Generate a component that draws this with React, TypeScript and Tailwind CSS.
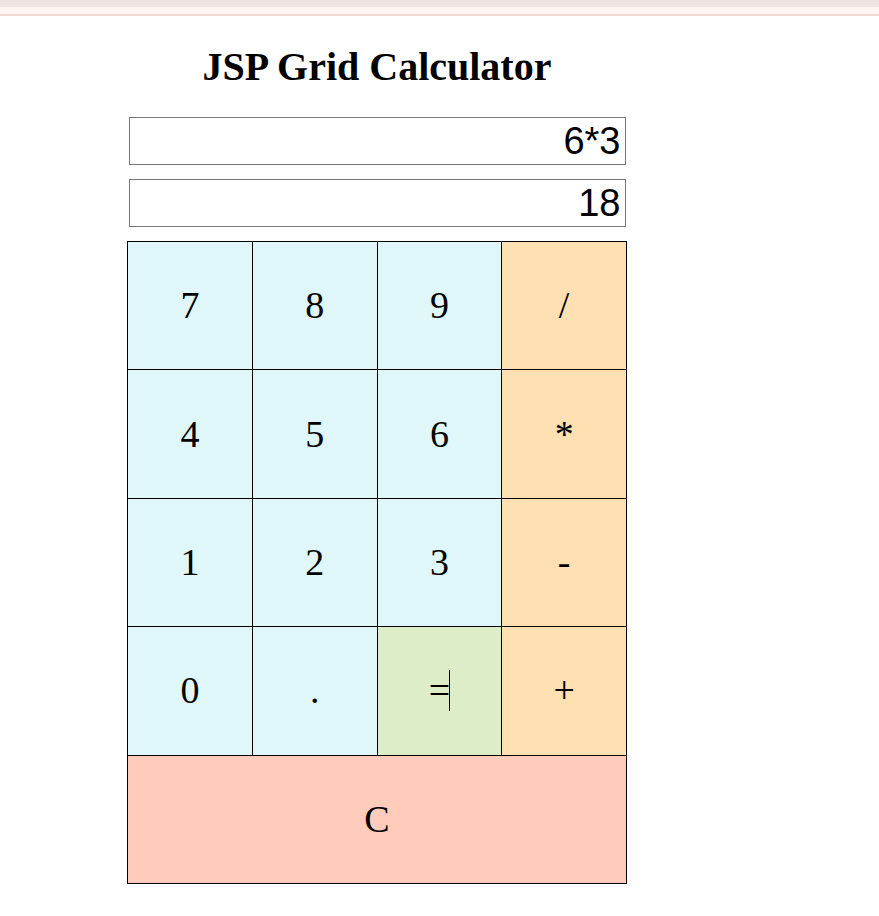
import React from "react";

const keys: { label: string; bg: string; span?: boolean; cursor?: boolean }[] = [
  { label: "7", bg: "bg-[#e0f7fa]" },
  { label: "8", bg: "bg-[#e0f7fa]" },
  { label: "9", bg: "bg-[#e0f7fa]" },
  { label: "/", bg: "bg-[#ffe0b2]" },
  { label: "4", bg: "bg-[#e0f7fa]" },
  { label: "5", bg: "bg-[#e0f7fa]" },
  { label: "6", bg: "bg-[#e0f7fa]" },
  { label: "*", bg: "bg-[#ffe0b2]" },
  { label: "1", bg: "bg-[#e0f7fa]" },
  { label: "2", bg: "bg-[#e0f7fa]" },
  { label: "3", bg: "bg-[#e0f7fa]" },
  { label: "-", bg: "bg-[#ffe0b2]" },
  { label: "0", bg: "bg-[#e0f7fa]" },
  { label: ".", bg: "bg-[#e0f7fa]" },
  { label: "=", bg: "bg-[#dcedc8]", cursor: true },
  { label: "+", bg: "bg-[#ffe0b2]" },
  { label: "C", bg: "bg-[#ffccbc]", span: true },
];

export default function App() {
  return (
    <div className="min-h-[916px] w-[879px] bg-white">
      <div className="h-[7px] bg-[#f0e4e2]" />
      <div className="h-[7px] bg-[#fff5f2]" />
      <div className="h-[2px] bg-[#f2d8d0]" />
      <div className="ml-[127px] w-[500px] flex flex-col items-center">
        <h1 className="mt-[28px] h-[46px] flex items-center justify-center text-[40px] font-bold text-black leading-none font-['Liberation_Serif',serif]">
          JSP Grid Calculator
        </h1>
        <div className="mt-[27px] flex flex-col gap-[14px] w-[497px]">
          <div className="h-[48px] border border-[#767676] flex items-center justify-end pr-[4px] text-[38px] leading-none text-black font-['Liberation_Sans',Arial,sans-serif]">
            6*3
          </div>
          <div className="h-[48px] border border-[#767676] flex items-center justify-end pr-[4px] text-[38px] leading-none text-black font-['Liberation_Sans',Arial,sans-serif]">
            18
          </div>
        </div>
        <div className="mt-[14px] w-[500px] grid grid-cols-4 grid-rows-[repeat(5,127.4px)] gap-px p-px bg-black">
          {keys.map((k) => (
            <div
              key={k.label}
              className={`${k.bg} ${k.span ? "col-span-4" : ""} relative flex items-center justify-center text-[38px] text-black font-['Liberation_Serif',serif]`}
            >
              {k.label}
              {k.cursor && (
                <div className="absolute left-[71px] top-[43px] w-px h-[41px] bg-black" />
              )}
            </div>
          ))}
        </div>
      </div>
    </div>
  );
}
